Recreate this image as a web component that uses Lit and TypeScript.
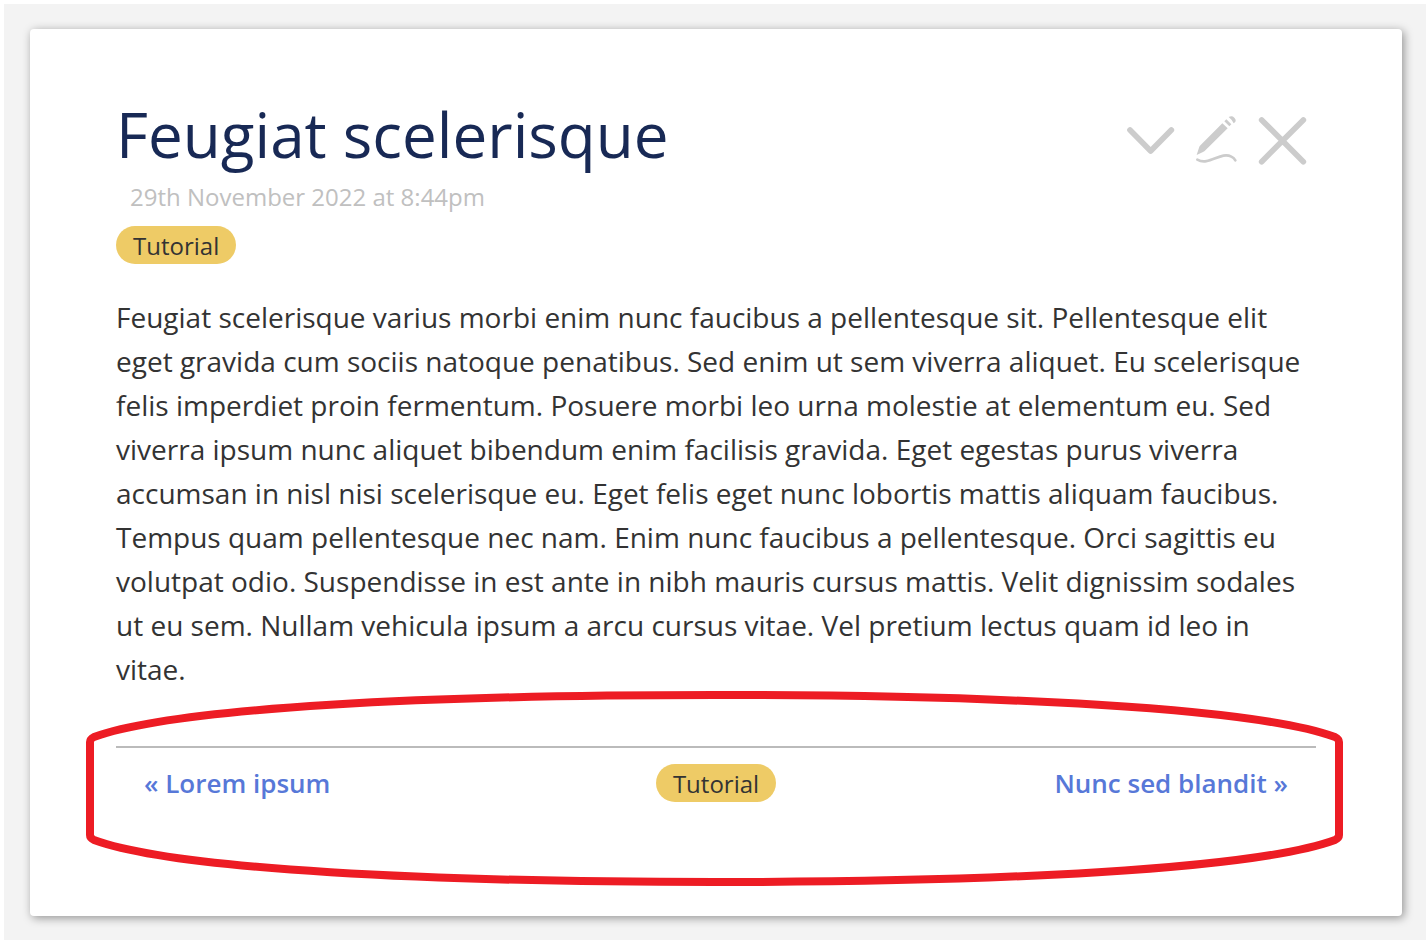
import { LitElement, html, css, svg } from "lit";
import { customElement } from "lit/decorators.js";

@customElement("tag-pill")
export class TagPill extends LitElement {
  static styles = css`
    :host {
      display: inline-flex;
    }
    .pill {
      height: 38px;
      padding: 1px 17px 0;
      border: 0;
      border-radius: 19px;
      background: #eecb66;
      color: #333;
      font: 400 24px / 37px "Open Sans", "Noto Sans", sans-serif;
      cursor: pointer;
    }
  `;
  render() {
    return html`<button class="pill" type="button"><slot></slot></button>`;
  }
}

const icons = {
  more: svg`<path class="line" d="M36 66 98 129 160 66" />`,
  edit: svg`
    <path d="M38 141 45 119Q46 115 50 111L115 46 131 61 65 126Q61 130 57 132Z" />
    <path d="M121 40 127 34 142 49 136 55ZM134 27Q144 22 151 29 158 36 153 43L149 46Q144 35 134 27Z" />
    <path class="thin" d="M40 155C75 175 110 129 142 146Q150 150 154 157" />`,
  close: svg`<path class="line" d="M35 36 160 161M160 36 35 161" />`,
};

@customElement("app-root")
export class AppRoot extends LitElement {
  static styles = css`
    :host {
      display: block;
      box-sizing: border-box;
      min-height: 100vh;
      padding: 4px 0 0 4px;
      background: #fff;
      color: #333;
      font-family: "Open Sans", "Noto Sans", sans-serif;
    }
    .page {
      box-sizing: border-box;
      min-height: calc(100vh - 4px);
      padding: 25px 24px 24px 26px;
      background: #f3f3f3;
    }
    .card {
      padding: 68px 86px 114px;
      border-radius: 4px;
      background: #fff;
      box-shadow: 2px 2px 10px rgba(0, 0, 0, 0.4);
    }
    .head {
      display: flex;
      justify-content: space-between;
      align-items: flex-start;
      padding-bottom: 3px;
    }
    .title {
      margin: 0;
      color: #182955;
      font-size: 62px;
      font-weight: 400;
      line-height: 74px;
    }
    .tools {
      display: flex;
      padding-top: 11px;
    }
    .tool {
      width: 66px;
      height: 66px;
      padding: 0;
      border: 0;
      background: none;
      cursor: pointer;
    }
    .icon {
      display: block;
      width: 66px;
      height: 66px;
      fill: #ccc;
    }
    .line,
    .thin {
      fill: none;
      stroke: #ccc;
      stroke-width: 17;
      stroke-linecap: round;
      stroke-linejoin: round;
    }
    .thin {
      stroke-width: 8;
    }
    .date {
      padding-left: 14px;
      color: #c0c0c0;
      font-size: 24px;
      line-height: 40px;
    }
    .tags {
      display: flex;
      padding-top: 9px;
    }
    .text {
      margin: 31px 0 0;
      font-size: 28px;
      line-height: 44px;
    }
    .nav {
      position: relative;
      display: grid;
      grid-template-columns: 1fr auto 1fr;
      align-items: center;
      margin-top: 55px;
      padding: 16px 28px 0;
      border-top: 2px solid #bbb;
    }
    .link {
      justify-self: start;
      color: #5778d8;
      font-size: 26px;
      font-weight: 600;
      line-height: 38px;
      text-decoration: none;
    }
    .next {
      justify-self: end;
    }
    .ring {
      position: absolute;
      top: -57px;
      left: -30px;
      width: calc(100% + 57px);
      height: 195px;
      pointer-events: none;
    }
    .stroke {
      fill: none;
      stroke: #ed1c24;
      stroke-width: 8;
      stroke-linejoin: round;
      vector-effect: non-scaling-stroke;
    }
  `;

  private tool(name: keyof typeof icons) {
    return html`<button class="tool" type="button" aria-label=${name}>
      <svg class="icon" viewBox="0 0 198 198" aria-hidden="true">${icons[name]}</svg>
    </button>`;
  }

  render() {
    return html`
      <main class="page">
        <article class="card">
          <header class="head">
            <h1 class="title">Feugiat scelerisque</h1>
            <div class="tools">${this.tool("more")}${this.tool("edit")}${this.tool("close")}</div>
          </header>
          <div class="date">29th November 2022 at 8:44pm</div>
          <div class="tags"><tag-pill>Tutorial</tag-pill></div>
          <p class="text">
            Feugiat scelerisque varius morbi enim nunc faucibus a pellentesque sit. Pellentesque elit
            eget gravida cum sociis natoque penatibus. Sed enim ut sem viverra aliquet. Eu scelerisque
            felis imperdiet proin fermentum. Posuere morbi leo urna molestie at elementum eu. Sed
            viverra ipsum nunc aliquet bibendum enim facilisis gravida. Eget egestas purus viverra
            accumsan in nisl nisi scelerisque eu. Eget felis eget nunc lobortis mattis aliquam faucibus.
            Tempus quam pellentesque nec nam. Enim nunc faucibus a pellentesque. Orci sagittis eu
            volutpat odio. Suspendisse in est ante in nibh mauris cursus mattis. Velit dignissim sodales
            ut eu sem. Nullam vehicula ipsum a arcu cursus vitae. Vel pretium lectus quam id leo in
            vitae.
          </p>
          <nav class="nav">
            <a class="link" href="#lorem-ipsum">« Lorem ipsum</a>
            <tag-pill>Tutorial</tag-pill>
            <a class="link next" href="#nunc-sed-blandit">Nunc sed blandit »</a>
            <svg class="ring" viewBox="0 0 1257 195" preserveAspectRatio="none" aria-hidden="true">
              <path
                class="stroke"
                d="M4 51Q4 48 8 46C90 16 350 4 628 4S1167 16 1249 46Q1253 48 1253 51V144Q1253 147 1249 149C1167 179 906 191 628 191S90 179 8 149Q4 147 4 144Z"
              />
            </svg>
          </nav>
        </article>
      </main>
    `;
  }
}
